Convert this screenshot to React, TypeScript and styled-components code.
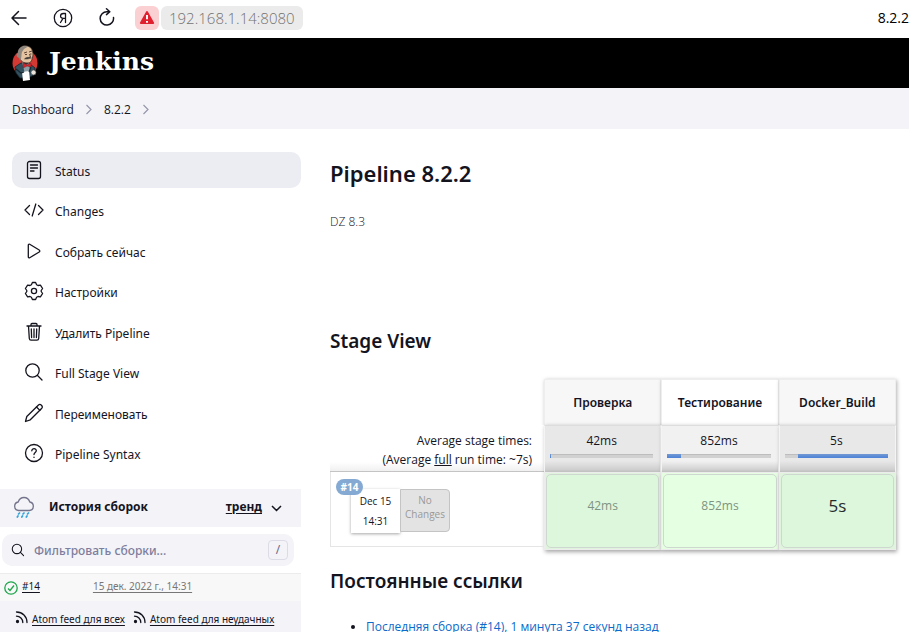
import React from "react";
import styled, { createGlobalStyle } from "styled-components";

const GlobalStyle = createGlobalStyle`
  *, *::before, *::after { box-sizing: border-box; }
  body {
    margin: 0;
    background: #fff;
    color: #14141f;
    font-family: "Noto Sans", "Open Sans", sans-serif;
    font-size: 12px;
    line-height: 20px;
  }
  a { color: inherit; }
  button, input { font: inherit; color: inherit; }
`;

const Page = styled.div`
  height: 100vh;
  overflow: hidden;
`;

/* Browser bar */
const BrowserBar = styled.div`
  display: flex;
  align-items: center;
  height: 38px;
  padding: 0 0 2px 8px;
  overflow: hidden;
`;

const NavButton = styled.button`
  display: flex;
  align-items: center;
  justify-content: center;
  width: 22px;
  height: 24px;
  margin-right: 22px;
  padding: 0;
  border: 0;
  background: none;
`;

const Warning = styled.span`
  display: flex;
  align-items: center;
  justify-content: center;
  width: 24px;
  height: 24px;
  margin-left: -5px;
  border-radius: 6px;
  background: #fbd0d3;
`;

const Address = styled.span`
  height: 24px;
  margin-left: 2px;
  padding: 0 8px;
  border-radius: 6px;
  background: #ebebeb;
  color: #737373;
  font-family: "Open Sans", sans-serif;
  font-weight: 300;
  font-size: 15px;
  line-height: 24px;
`;

const PageTitle = styled.span`
  margin-left: auto;
  color: #000;
  font-family: "Open Sans", sans-serif;
  font-size: 14px;
`;

/* Jenkins header */
const Header = styled.header`
  display: flex;
  align-items: center;
  height: 50px;
  padding-left: 11px;
  background: #000;
`;

const Brand = styled.a`
  display: flex;
  align-items: center;
  gap: 10px;
  color: #fff;
  font: bold 25px/28px "DejaVu Serif", serif;
  text-decoration: none;

  span { padding-bottom: 3px; }
`;

const Breadcrumbs = styled.nav`
  display: flex;
  align-items: center;
  gap: 10px;
  height: 41px;
  padding: 2px 12px 0;
  background: #f4f4f8;
  font-family: "Open Sans", sans-serif;

  a { text-decoration: none; }
`;

/* Columns */
const Columns = styled.div`
  display: flex;
  align-items: flex-start;
`;

const Sidebar = styled.aside`
  flex: none;
  width: 301px;
  padding-top: 23px;
`;

const Tasks = styled.nav`
  display: flex;
  flex-direction: column;
  justify-content: space-between;
  min-height: 319px;
  padding-left: 12px;
`;

const Task = styled.a<{ $active?: boolean }>`
  display: flex;
  align-items: center;
  gap: 11px;
  height: 36px;
  padding: 0 12px;
  border-radius: 10px;
  background: ${(p) => (p.$active ? "#ececf3" : "transparent")};
  text-decoration: none;

  span { padding-top: 4px; }
`;

const HistoryHeader = styled.div`
  display: flex;
  align-items: center;
  height: 38px;
  margin-top: 18px;
  padding: 0 18px 2px 13px;
  background: #f3f3f8;
  font-weight: 700;

  h2 {
    margin: 0 auto 0 14px;
    font: inherit;
  }
  a { margin-right: 7px; text-underline-offset: 2px; }
`;

const CollapseButton = styled.button`
  display: flex;
  padding: 2px 0 0;
  border: 0;
  background: none;
`;

const FilterBox = styled.label`
  display: flex;
  align-items: center;
  height: 32px;
  margin: 7px 7px 7px 2px;
  padding: 0 6px 0 9px;
  border-radius: 10px;
  background: #f3f3f8;
`;

const FilterInput = styled.input`
  flex: 1;
  min-width: 0;
  margin-left: 9px;
  padding: 2px 0 0;
  border: 0;
  outline: 0;
  background: none;
  font-weight: 500;

  &::placeholder { color: #7e7e9c; opacity: 1; }
`;

const Shortcut = styled.kbd`
  width: 20px;
  height: 20px;
  border: 1px solid #dcdce6;
  border-radius: 4px;
  color: #6b6b8a;
  font: 12px/18px "Noto Sans", sans-serif;
  text-align: center;
`;

const BuildRow = styled.div`
  display: flex;
  align-items: center;
  height: 28px;
  padding: 0 4px 4px;
  border-top: 1px solid #ececec;
  background: #f8f8f8;
  font-size: 11px;

  svg { margin: 4px 4px 0 0; }
  time { margin-left: 53px; }
`;

const SmallLink = styled.a<{ $muted?: boolean }>`
  color: ${(p) => (p.$muted ? "#777" : "inherit")};
  font-size: 10px;
  font-family: "Noto Sans", sans-serif;
  text-underline-offset: 2px;
`;

const Feeds = styled.div`
  display: flex;
  height: 40px;
  padding: 8px 15px;
  background: #f3f3f8;
  white-space: nowrap;

  svg { flex: none; margin: 2px 4px 0 0; }
  a + svg { margin-left: 8px; }
`;

const Main = styled.main`
  flex: 1;
  min-width: 0;
  padding: 30px 13px 0 29px;
`;

const Title = styled.h1`
  margin: 0;
  font: 600 22px/28px "Noto Sans", sans-serif;
`;

const SectionTitle = styled.h2`
  margin: 0;
  font: 600 19px/24px "Noto Sans", sans-serif;
`;

const Description = styled.p`
  margin: 25px 0 97px;
  font-family: "Open Sans", sans-serif;
  font-weight: 300;
`;

/* Stage view */
const StageTable = styled.table`
  width: 100%;
  margin: 26px 0 19px;
  border-collapse: separate;
  border-spacing: 0;
  table-layout: fixed;

  th, td { padding: 0; }
`;

const StageHead = styled.th<{ $even?: boolean }>`
  height: 46px;
  border: solid #eeeeef;
  border-width: 1px 1px 0;
  background: ${(p) => (p.$even ? "#fff" : "#f7f7f7")};
  box-shadow: 1px 1px 4px rgba(0, 0, 0, 0.3);
  font-weight: 600;
`;

const AverageLabel = styled.td`
  height: 47px;
  padding: 0 12px 2px 0 !important;
  border-bottom: 1px solid #c4c4c4;
  background: linear-gradient(to top, #f0f0f0, #fff 9px);
  font-family: "Open Sans", sans-serif;
  line-height: 19px;
  text-align: right;
  vertical-align: bottom;
`;

const AverageCell = styled.td<{ $even?: boolean }>`
  padding: 5px 7px 0 5px !important;
  border: solid #f4f4f4;
  border-width: 0 1px;
  border-top: 1px solid #ddd;
  background: linear-gradient(to top, #c8c8c8, transparent 11px),
    ${(p) => (p.$even ? "#f1f1f1" : "#e8e8e8")};
  box-shadow: 1px 1px 4px rgba(0, 0, 0, 0.3);
  font-family: "Open Sans", sans-serif;
  text-align: center;
  vertical-align: top;
`;

const Meter = styled.div`
  display: flex;
  height: 4px;
  margin-top: 3px;
  background: #d1d1d1;
  border-top: 1px solid #bdbdbd;
`;

const MeterFill = styled.div`
  height: 4px;
  margin-top: -1px;
  background: linear-gradient(#7399d2, #4c82d8);
`;

const RunCell = styled.td`
  vertical-align: top;
`;

const RunInfo = styled.div`
  display: flex;
  position: relative;
  height: 75px;
  padding: 17px 0 0 20px;
  border: solid #e5e5e5;
  border-width: 0 0 1px 1px;
  font-family: "Open Sans", sans-serif;
  font-size: 10px;
  text-align: center;
`;

const RunBadge = styled.a`
  position: absolute;
  top: 7px;
  left: 5px;
  width: 27px;
  height: 16px;
  border-radius: 8px;
  background: #84a9d2;
  color: #fff;
  font-size: 10px;
  font-weight: 700;
  line-height: 17px;
  text-decoration: none;
`;

const RunDate = styled.div`
  width: 49px;
  height: 44px;
  padding-top: 2px;
  background: #fff;
  box-shadow: 0 1px 3px rgba(0, 0, 0, 0.35);
  line-height: 20px;
`;

const RunChanges = styled.div`
  width: 50px;
  height: 43px;
  padding-top: 3px;
  border: 1px solid #c4c4c4;
  border-radius: 0 4px 4px 0;
  background: #e3e3e3;
  color: #999;
  line-height: 14px;
`;

const ResultCell = styled.td<{ $even?: boolean }>`
  height: 78px;
  padding: 1px !important;
  border: 1px solid #ececec;
  background: ${(p) => (p.$even ? "#e5fde1" : "#dff3dd")};
  box-shadow: 1px 2px 4px rgba(0, 0, 0, 0.35);
`;

const Result = styled.div<{ $even?: boolean; $large?: boolean }>`
  height: 74px;
  border: 1px solid #cfd8d0;
  border-radius: 5px;
  background: ${(p) => (p.$even ? "#e4ffe1" : "#ddf7dc")};
  color: ${(p) => (p.$large ? "#252b2c" : "#7f9382")};
  font-family: "Open Sans", sans-serif;
  font-size: ${(p) => (p.$large ? "17px" : "12px")};
  line-height: 62px;
  text-align: center;
`;

const Permalinks = styled.ul`
  margin: 24px 0 0;
  padding-left: 36px;
  font-family: "Open Sans", sans-serif;

  a { color: #0b6aca; text-decoration: none; }
`;

type IconProps = { size?: number; width?: number; children: React.ReactNode };
const Icon = ({ size = 20, width = 1.3, children }: IconProps) => (
  <svg width={size} height={size} viewBox="0 0 20 20" fill="none" stroke="currentColor"
    strokeWidth={width} strokeLinecap="round" strokeLinejoin="round" aria-hidden="true">
    {children}
  </svg>
);

const Butler = () => (
  <svg width="28" height="38" viewBox="0 0 28 38" aria-hidden="true">
    <ellipse cx="14" cy="19" rx="12.5" ry="13" fill="#d33833" />
    <path d="M4 23l6-4 9 1 5 4-1 7-6 3H9l-4-5z" fill="#33505f" stroke="#15232b" strokeWidth=".8" />
    <path d="M11 18l4 3 3-2 1 8-5 3z" fill="#8fa0a6" />
    <path d="M7 8c1-5 5-7 9-6 5 1 6 5 6 9-1 6-2 8-6 8-5 0-8-3-9-11z" fill="#e3c3a0" stroke="#3b302b" strokeWidth=".8" />
    <path d="M7 9c-2 0-2 4 1 5l1 3c2-3 1-6 2-9l2-3 4-2.500C13 1 7 3 7 9z" fill="#8d8780" />
    <path d="M13 9l3-1m2 0l3-1M14 10.500h2m3-.5h1.500m-2 0l1 3-2 .5" fill="none" stroke="#50382e" strokeWidth=".9" />
    <path d="M13.500 15c1-2 5-2 7-1-2 0-3 1.500-7 1z" fill="#453c39" stroke="#453c39" strokeWidth=".5" />
    <path d="M12 19l4 2 4-2v4l-4-1-4 2z" fill="#d3262c" stroke="#7f1d20" strokeWidth=".5" />
    <path d="M11 28l7-1 1 9-7 1z" fill="#fff" />
    <circle cx="22.500" cy="28.500" r="2.500" fill="#eae4dc" stroke="#454646" strokeWidth=".6" />
    <path d="M5 25l5 4 3-1m7-5l-2 5" fill="none" stroke="#172831" strokeWidth="1.200" />
  </svg>
);

const Cloud = () => (
  <svg width="22" height="22" viewBox="0 0 22 22" fill="none" strokeLinecap="round" aria-hidden="true">
    <path d="M6 14.500H5.500a4.300 4.300 0 0 1-.3-8.500C6.200 3 8.300 1.500 11 1.500S15.800 3 16.800 6a4.300 4.300 0 0 1-.3 8.500z"
      stroke="#73738c" strokeWidth="1.300" strokeLinejoin="round" />
    <path d="M6.500 17l-1 1m5.500-1l-1 1m5.500-1l-1 1M5 20l-.7 1m5.200-1l-.7 1m5.200-1l-.7 1" stroke="#33a5dc" strokeWidth="1.700" />
  </svg>
);

const Chevron = () => (
  <svg width="10" height="11" viewBox="0 0 10 11" fill="none" stroke="#9696ad" strokeWidth="1.200" aria-hidden="true">
    <path d="M2.500 1L7 5.500 2.500 10" />
  </svg>
);

const Rss = () => (
  <svg width="13" height="13" viewBox="0 0 13 13" fill="none" stroke="currentColor" strokeWidth="1.300" strokeLinecap="round" aria-hidden="true">
    <path d="M1.500 1C7.500 1 12 5.500 12 11.500M1.500 5.200c3.500 0 6.300 2.800 6.300 6.300" />
    <circle cx="2.500" cy="10.500" r="1" fill="currentColor" />
  </svg>
);

const magnifier = <><circle cx="8.500" cy="8.500" r="6.700" /><path d="M13.500 13.500l4.500 4.500" /></>;

const tasks = [
  { label: "Status", icon: <><rect x="3.500" y="1.500" width="13" height="17" rx="2" /><path d="M6.500 5h7M6.500 8h7M6.500 11h3.500" /></> },
  { label: "Changes", icon: <path d="M5.500 5.500L1 10l4.500 4.500M14.500 5.500L19 10l-4.500 4.500M11.800 4L8.200 16" /> },
  { label: "Собрать сейчас", icon: <path d="M4.300 4.100v11.800c0 .8.700 1.200 1.400.8l9.500-5.700c.8-.5.800-1.500 0-2L5.700 3.300c-.7-.4-1.400 0-1.400.8z" /> },
  {
    label: "Настройки",
    icon: <><circle cx="10" cy="10" r="2.600" /><path d="M8.400 1.500h3.200l1 2.200 1.400.8 2.400-.3 2.200 3.300-1.400 2v1l1.400 2-2.200 3.300-2.400-.3-1.400.8-1 2.200H8.400l-1-2.200-1.400-.8-2.400.3-2.200-3.300 1.400-2v-1l-1.400-2 2.200-3.300 2.400.3 1.400-.8z" /></>,
  },
  { label: "Удалить Pipeline", icon: <><path d="M3 4h14M7 4V2.500c0-.6.400-1 1-1h4c.6 0 1 .4 1 1V4M4.500 4l.8 12.500c.1 1 .7 1.700 1.700 1.700h6c1 0 1.600-.7 1.700-1.700L15.500 4M10 7v8.500M7.300 7l.3 8.500M12.700 7l-.3 8.500" /></> },
  { label: "Full Stage View", icon: magnifier },
  { label: "Переименовать", icon: <><path d="M1.500 18.500l1.300-5L14.500 2c1.800-1.700 4.900 1.200 3.300 3.200L6.300 16.800z" /><path d="M12.500 4l3.400 3.400" /></> },
  { label: "Pipeline Syntax", icon: <><circle cx="10" cy="10" r="8.500" /><path d="M7.800 7.800C7.800 4.900 12.400 5 12.300 7.700c0 1.700-2.300 1.800-2.300 3.800M10 14.200v.2" /></> },
];

const stages = [
  { name: "Проверка", time: "42ms", before: 0, share: 1 },
  { name: "Тестирование", time: "852ms", before: 0, share: 13 },
  { name: "Docker_Build", time: "5s", before: 13, share: 87 },
];

export default function App() {
  return (
    <Page>
      <GlobalStyle />
      <BrowserBar>
        <NavButton aria-label="Back">
          <Icon width={1.5}><path d="M17 10H3.500M9.500 3.500L3 10l6.500 6.500" /></Icon>
        </NavButton>
        <NavButton aria-label="Yandex">
          <Icon><circle cx="10" cy="10" r="8.700" /><path d="M12.500 14.500v-9h-2C6.500 5.500 6.800 10.300 10 10.300h2.500M10 10.300l-2.500 4.200" /></Icon>
        </NavButton>
        <NavButton aria-label="Reload">
          <Icon width={1.5}><path d="M16.500 9.500A6.700 6.700 0 1 1 10 3.700h2.500M9.500.8l3.300 2.900-3.300 2.900" /></Icon>
        </NavButton>
        <Warning>
          <svg width="16" height="16" viewBox="0 0 16 16" aria-hidden="true">
            <path d="M8 2.200L14 13H2z" fill="#e0202e" stroke="#e0202e" strokeWidth="2.200" strokeLinejoin="round" />
            <path d="M8 5v4.200M8 11v1.800" stroke="#fff" strokeWidth="1.900" />
          </svg>
        </Warning>
        <Address>192.168.1.14:8080</Address>
        <PageTitle>8.2.2</PageTitle>
      </BrowserBar>

      <Header>
        <Brand href="#"><Butler /><span>Jenkins</span></Brand>
      </Header>
      <Breadcrumbs aria-label="Breadcrumbs">
        <a href="#">Dashboard</a><Chevron /><a href="#">8.2.2</a><Chevron />
      </Breadcrumbs>

      <Columns>
        <Sidebar>
          <Tasks>
            {tasks.map((task, i) => (
              <Task key={task.label} href="#" $active={i === 0}>
                <Icon>{task.icon}</Icon>
                <span>{task.label}</span>
              </Task>
            ))}
          </Tasks>
          <HistoryHeader>
            <Cloud />
            <h2>История сборок</h2>
            <a href="#">тренд</a>
            <CollapseButton aria-label="Свернуть">
              <svg width="14" height="14" viewBox="0 0 14 14" fill="none" stroke="currentColor" strokeWidth="1.500">
                <path d="M3 5l4.500 4.500L12 5" />
              </svg>
            </CollapseButton>
          </HistoryHeader>
          <FilterBox>
            <Icon size={14} width={1.5}>{magnifier}</Icon>
            <FilterInput aria-label="Фильтровать сборки" placeholder="Фильтровать сборки..." />
            <Shortcut>/</Shortcut>
          </FilterBox>
          <BuildRow>
            <svg width="14" height="14" viewBox="0 0 14 14" fill="none" stroke="#1ea64b" strokeWidth="1.300" aria-hidden="true">
              <circle cx="7" cy="7" r="6.200" /><path d="M4 7.500l2 2 4-5" />
            </svg>
            <SmallLink href="#">#14</SmallLink>
            <time><SmallLink href="#" $muted>15 дек. 2022 г., 14:31</SmallLink></time>
          </BuildRow>
          <Feeds>
            <Rss /><SmallLink href="#">Atom feed для всех</SmallLink>
            <Rss /><SmallLink href="#">Atom feed для неудачных</SmallLink>
          </Feeds>
        </Sidebar>

        <Main>
          <Title>Pipeline 8.2.2</Title>
          <Description>DZ 8.3</Description>
          <SectionTitle>Stage View</SectionTitle>
          <StageTable>
            <colgroup><col width="214" /><col /><col /><col /></colgroup>
            <thead>
              <tr>
                <td />
                {stages.map((s, i) => <StageHead key={s.name} $even={i === 1}>{s.name}</StageHead>)}
              </tr>
            </thead>
            <tbody>
              <tr>
                <AverageLabel>Average stage times:<br />(Average <u>full</u> run time: ~7s)</AverageLabel>
                {stages.map((s, i) => (
                  <AverageCell key={s.name} $even={i === 1}>
                    {s.time}
                    <Meter>
                      <MeterFill style={{ marginLeft: `${s.before}%`, width: `${s.share}%` }} />
                    </Meter>
                  </AverageCell>
                ))}
              </tr>
              <tr>
                <RunCell>
                  <RunInfo>
                    <RunDate>Dec 15<br />14:31</RunDate>
                    <RunChanges>No<br />Changes</RunChanges>
                    <RunBadge href="#">#14</RunBadge>
                  </RunInfo>
                </RunCell>
                {stages.map((s, i) => (
                  <ResultCell key={s.name} $even={i === 1}>
                    <Result $even={i === 1} $large={i === 2}>{s.time}</Result>
                  </ResultCell>
                ))}
              </tr>
            </tbody>
          </StageTable>
          <SectionTitle>Постоянные ссылки</SectionTitle>
          <Permalinks>
            <li><a href="#">Последняя сборка (#14), 1 минута 37 секунд назад</a></li>
          </Permalinks>
        </Main>
      </Columns>
    </Page>
  );
}
